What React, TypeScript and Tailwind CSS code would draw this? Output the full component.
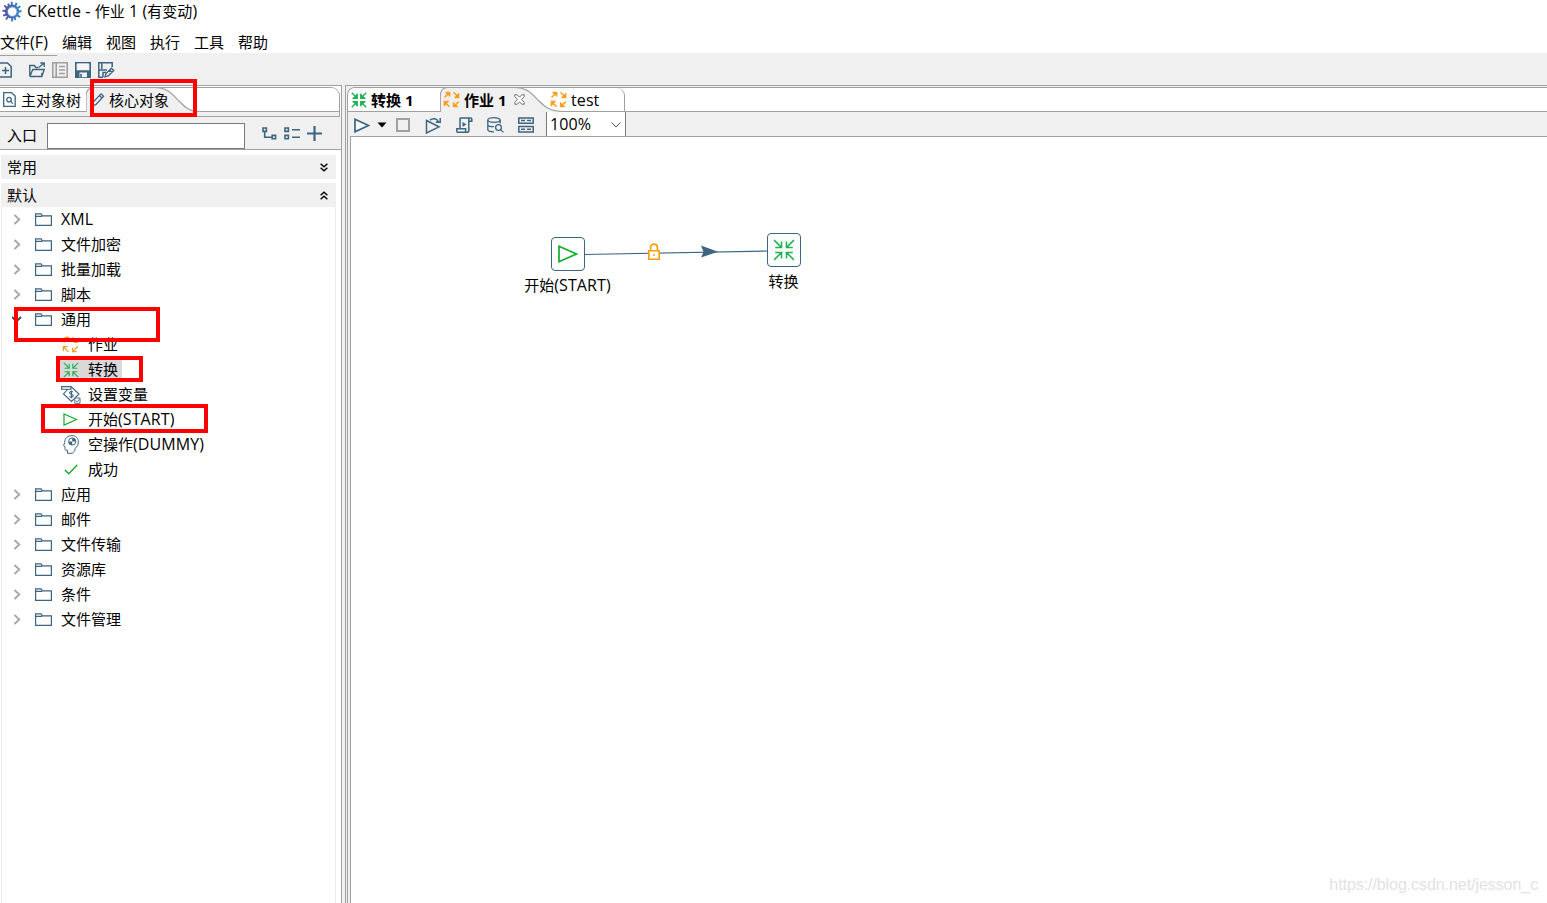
import type { ReactNode } from 'react';
import clsx from 'clsx';

const STEEL = '#3d6480';
const GREEN = '#1eb254';
const ORANGE = '#fa9d21';

type IconProps = { className?: string; color?: string; thin?: boolean };

// latin runs are set one pixel larger than the chinese ones
const Text = ({ children, className }: { children: string; className?: string }) => (
  <span className={clsx('whitespace-pre', className)}>
    {children.split(/([\x20-\x7e]+)/).map((part, i) =>
      i % 2 ? (
        <span key={i} className="text-[16px] leading-none tracking-[0.1px]">
          {part}
        </span>
      ) : (
        part
      )
    )}
  </span>
);

const LogoIcon = () => (
  <svg width="20" height="21" viewBox="0 0 20 21" fill="none" className="shrink-0">
    <defs>
      <linearGradient id="logo" gradientUnits="userSpaceOnUse" x1="0" y1="0" x2="20" y2="0">
        <stop offset="0" stopColor="#5f4ca0" />
        <stop offset="1" stopColor="#2a8acb" />
      </linearGradient>
    </defs>
    <circle cx="10" cy="10.5" r="5.6" stroke="url(#logo)" strokeWidth="3" />
    <path
      d="M10 6L9.6 .8M12.5 7L14.6 1.8M14 8L18.4 5.2M14.5 10.5L19.6 10.2M14 13L18 16.2M12 15L13.4 19M10 15L10.2 20.4M7 14L4 18.6M6 13L1.2 14.6M5.5 10.5L.4 9.6M6 8L2.2 4.4M8 7L6 2.6"
      stroke="url(#logo)"
      strokeWidth="1.9"
    />
    <circle cx="10.4" cy="10.7" r="4.2" fill="#fff" />
    <circle cx="10.4" cy="10.7" r="4.6" stroke="#a9d4f2" strokeWidth="1" strokeDasharray="1.5 1" />
  </svg>
);

const NewIcon = () => (
  <svg width="12" height="16" viewBox="0 0 12 16" fill="none" stroke={STEEL} strokeWidth="1.5">
    <path d="M-1 1H7.5L11.2 4.5V15H-1" />
    <path d="M2 8.5H9M5.5 5V12" />
  </svg>
);

const OpenIcon = () => (
  <svg width="16" height="16" viewBox="0 0 16 16" fill="none" stroke={STEEL} strokeWidth="1.4">
    <path d="M.8 14.5V3.5H5.3L6.8 5.5H9.3M.8 14.5H12.8L15.2 7.5H3.8L.8 14.5M12.8 14.5V11" />
    <path d="M9.8 5.5L14.8 1.2M11.3 1H15.2V5" />
  </svg>
);

const ListDocIcon = () => (
  <svg width="16" height="16" viewBox="0 0 16 16" fill="none" stroke="#a0a0a0" strokeWidth="1.6">
    <path d="M.8 .8H15.2V15.2H.8ZM4.2 1V15M7 4.5H13M7 8H13M7 11.5H13" />
  </svg>
);

const SaveIcon = () => (
  <svg width="16" height="16" viewBox="0 0 16 16" fill="none" stroke={STEEL} strokeWidth="1.6">
    <path d="M.8 .8H15.2V15.2H.8Z" />
    <path d="M3 1.6H13V7H3Z" fill="#f7f7f7" stroke="none" />
    <path d="M1 8.3H15V15H1Z" fill={STEEL} stroke="none" />
    <path d="M4.5 10.5H12V15.2H4.5Z" fill="#f0f0f0" stroke="none" />
    <path d="M6 12V15" />
  </svg>
);

const SaveAsIcon = () => (
  <svg width="17" height="16" viewBox="0 0 17 16" fill="none" stroke={STEEL} strokeWidth="1.5">
    <path d="M5 15.2H.8V.8H14.2V5M1 8H9M3.8 1V7M5 15V10.5H8" />
    <path d="M7 14.8L8 11.5L13.5 6.2L15.8 8.5L10.2 13.8ZM11.5 8L14 10.5" strokeWidth="1.3" />
  </svg>
);

const SearchDocIcon = () => (
  <svg width="13" height="15" viewBox="0 0 13 15" fill="none" stroke={STEEL} strokeWidth="1.3">
    <path d="M.7 .7H8.5L12.2 4V14.3H.7Z" />
    <circle cx="6" cy="7.6" r="2.3" />
    <path d="M7.8 9.4L9.8 11.6" />
  </svg>
);

const PencilIcon = () => (
  <svg width="14" height="15" viewBox="0 0 14 15" fill="none" stroke={STEEL} strokeWidth="1.3">
    <path d="M1 14L2.2 10L10 1.8L12.6 4.2L4.8 12.6ZM8.4 3.6L11 6" />
  </svg>
);

// four arrows that meet in the middle
const TransIcon = ({ className, color = GREEN, thin }: IconProps) => (
  <svg viewBox="0 0 16 16" fill={thin ? 'none' : color} stroke={color} strokeWidth={thin ? 1.1 : 1.4} className={clsx('shrink-0', className)}>
    <path d="M.8 .8L6 6M6.2 1.8V6.2H1.6M15.2 .8L10 6M9.8 1.8V6.2H14.4M.8 15.2L6 10M6.2 14.2V9.8H1.6M15.2 15.2L10 10M9.8 14.2V9.8H14.4" />
  </svg>
);

// four arrows that chase one another
const JobIcon = ({ className, color = ORANGE, thin }: IconProps) => (
  <svg viewBox="0 0 17 17" fill={thin ? 'none' : color} stroke={color} strokeWidth={thin ? 1.2 : 1.5} className={clsx('shrink-0', className)}>
    <path d="M1.5 6.5L6.3 1.7M2.5 1.4H6.6V5.6" />
    <path d="M10.5 1.2L15.4 6.1M15.6 2.2V6.4H11.4" />
    <path d="M15.8 10.5L10.9 15.4M10.6 11.4V15.6H14.8" />
    <path d="M6.5 15.8L1.6 10.9M1.4 15V10.6H5.7" />
  </svg>
);

const StartIcon = ({ className }: IconProps) => (
  <svg viewBox="0 0 20 18" fill="none" stroke="#13ad2b" strokeWidth="1.7" className={clsx('shrink-0', className)}>
    <path d="M1 1.3L18.5 9L1 16.7Z" />
  </svg>
);

const VariableIcon = () => (
  <svg width="20" height="19" viewBox="0 0 20 19" fill="none" stroke={STEEL} strokeWidth="1.1">
    <path d="M.6 1.6H10V4.2H.6ZM10 1.5L18 9L10.5 16.5L2.5 9L6.5 4.5" />
    <path d="M12 7.2C11 6 8.4 6.4 8.6 8C8.8 9.6 12.2 8.8 12.2 10.8C12.2 12.4 9.4 12.6 8.4 11.2M10.4 5.5V13.3" />
    <path d="M13.8 13H19V18.4H13.8ZM14.8 15.6L16.2 17L18.4 14.2" fill="#fff" strokeWidth=".9" />
  </svg>
);

const DummyIcon = () => (
  <svg width="16" height="19" viewBox="0 0 16 19" fill="none" stroke={STEEL} strokeWidth="1">
    <path d="M4.5 18.3V15.2H3C2.2 15.2 2 14.5 2 13.6V11.6L.6 10.6L1.7 7.5C1.6 3 5 .6 9 .6C13 .6 15.4 3.6 15.4 7C15.4 10 13.8 11.5 12 13.5V15.5L9.2 18.3H4.5" />
    <circle cx="9.2" cy="6.5" r="3.6" />
    <path d="M9.2 6.5V2.9A3.6 3.6 0 0 1 12.8 6.5ZM9.2 6.5V10.1A3.6 3.6 0 0 1 5.6 6.5Z" fill={STEEL} stroke="none" />
  </svg>
);

const SuccessIcon = () => (
  <svg width="14" height="11" viewBox="0 0 14 11" fill="none" stroke="#13ad2b" strokeWidth="1.4">
    <path d="M.8 6L4.8 9.8L13.2 1" />
  </svg>
);

const FolderIcon = () => (
  <svg width="17" height="13" viewBox="0 0 17 13" fill="none" stroke={STEEL} strokeWidth="1.2">
    <path d="M.6 12.4V.8H6L7.4 2.8H16.4V12.4ZM1 3.4H7" />
  </svg>
);

const PlayIcon = () => (
  <svg width="16" height="15" viewBox="0 0 16 15" fill="none" stroke={STEEL} strokeWidth="1.7">
    <path d="M1 1.2L14.5 7.5L1 13.8Z" fill="#f7f7f7" />
  </svg>
);

const ReplayIcon = () => (
  <svg width="17" height="17" viewBox="0 0 17 17" fill="none" stroke={STEEL} strokeWidth="1.5">
    <path d="M1.5 3.5L14 9.8L1.5 16Z" />
    <path d="M5 3.2C8 .8 11.5 1.2 13.5 4.8M15.2 1V5.2H10.8" />
  </svg>
);

const ScriptIcon = () => (
  <svg width="17" height="16" viewBox="0 0 17 16" fill="none" stroke={STEEL} strokeWidth="1.5">
    <path d="M4 11.5V2C4 1.2 4.4 .9 5 .9H14.6C15.4 .9 15.8 1.4 15.8 2V4.2H12.8M12.8 1V14C12.8 14.8 12.4 15.2 11.6 15.2H1.6C1 15.2 .8 14.8 .8 14.2V11.8H9.6V15" />
    <path d="M6.5 5L10.5 7.4L6.5 9.8Z" fill={STEEL} stroke="none" />
  </svg>
);

const DatabaseIcon = () => (
  <svg width="17" height="16" viewBox="0 0 17 16" fill="none" stroke={STEEL} strokeWidth="1.3">
    <ellipse cx="7" cy="3" rx="6.2" ry="2.3" />
    <path d="M.8 3V12.5C.8 14 4 14.8 7 14.8M13.2 3V6.5M.8 8C1.5 9.4 4.5 9.8 7 9.6" />
    <circle cx="11.5" cy="10.5" r="2.9" />
    <path d="M13.6 12.6L16.4 15.4" />
  </svg>
);

const ResultsIcon = () => (
  <svg width="16" height="16" viewBox="0 0 16 16" fill="none" stroke={STEEL} strokeWidth="1.5">
    <path d="M.8 .9H15.2V6.2H.8ZM.8 9.6H15.2V14.9H.8ZM3 3.5H7M9 3.5H13M3 12.2H7M9 12.2H13" />
  </svg>
);

const ExpandIcon = () => (
  <svg width="15" height="13" viewBox="0 0 15 13" fill="none" stroke={STEEL} strokeWidth="1.6">
    <path d="M1 1H4.4V4.4H1ZM10.2 8.4H13.6V11.8H10.2ZM2.7 5V10.2H9.5" />
  </svg>
);

const CollapseIcon = () => (
  <svg width="16" height="13" viewBox="0 0 16 13" fill="none" stroke={STEEL} strokeWidth="1.6">
    <path d="M1 1H4.4V4.4H1ZM1 8.4H4.4V11.8H1ZM8 2.7H16M8 10.2H16" />
  </svg>
);

const PlusIcon = () => (
  <svg width="15" height="15" viewBox="0 0 15 15" stroke={STEEL} strokeWidth="2.2">
    <path d="M0 7.5H15M7.5 0V15" />
  </svg>
);

const DoubleChevron = ({ up }: { up?: boolean }) => (
  <svg width="8" height="9" viewBox="0 0 8 9" fill="none" stroke="#000" strokeWidth="1.4" className={clsx(up && 'rotate-180')}>
    <path d="M.6 .8L4 3.8L7.4 .8M.6 4.8L4 7.8L7.4 4.8" />
  </svg>
);

type TreeItem = { label: string; open?: boolean; children?: { label: string; icon: ReactNode; selected?: boolean }[] };

const tree: TreeItem[] = [
  { label: 'XML' },
  { label: '文件加密' },
  { label: '批量加载' },
  { label: '脚本' },
  {
    label: '通用',
    open: true,
    children: [
      { label: '作业', icon: <JobIcon thin className="size-[17px]" /> },
      { label: '转换', icon: <TransIcon thin className="size-4" />, selected: true },
      { label: '设置变量', icon: <VariableIcon /> },
      { label: '开始(START)', icon: <StartIcon className="h-[13px] w-[15px]" /> },
      { label: '空操作(DUMMY)', icon: <DummyIcon /> },
      { label: '成功', icon: <SuccessIcon /> },
    ],
  },
  { label: '应用' },
  { label: '邮件' },
  { label: '文件传输' },
  { label: '资源库' },
  { label: '条件' },
  { label: '文件管理' },
];

const menus = ['编辑', '视图', '执行', '工具', '帮助'];

const Highlight = ({ className }: { className: string }) => (
  <div className={clsx('pointer-events-none absolute z-10 border-4 border-[#fe0000]', className)} />
);

const TabCurve = ({ width, d }: { width: number; d: string }) => (
  <svg width={width} height="24" viewBox={`0 0 ${width} 24`} className="absolute top-0 left-0">
    <path d={d} fill="#f0f0f0" stroke="#a0a0a0" strokeWidth="1.2" />
  </svg>
);

const SectionBar = ({ label, up }: { label: string; up?: boolean }) => (
  <div className="ml-px flex h-6 w-[335px] shrink-0 items-center justify-between bg-[#f0f0f0] pr-2 pl-1.5">
    <span className="pb-px">{label}</span>
    <DoubleChevron up={up} />
  </div>
);

const Tree = () => (
  <div className="ml-px w-[335px] flex-1 border-x border-[#ececec]">
    {tree.map((item) => (
      <div key={item.label}>
        <div className="flex h-[25px] items-center">
          <svg width="10" height="11" viewBox="0 0 10 11" fill="none" strokeWidth="1.8" stroke={item.open ? '#404040' : '#a6a6a6'} className="ml-2.5">
            <path d={item.open ? 'M0 3L4.5 7.5L9 3' : 'M2.5 1L7.3 5.5L2.5 10'} />
          </svg>
          <span className="ml-[13px] w-[26px]">
            <FolderIcon />
          </span>
          <Text className="pb-0.5">{item.label}</Text>
        </div>
        {item.children?.map((child) => (
          <div key={child.label} className="flex h-[25px] items-center pl-[58px]">
            <span className={clsx('flex h-[21px] items-center', child.selected && 'bg-[#d9d9d9]')}>
              <span className="flex w-[21px] justify-center">{child.icon}</span>
              <Text className="pr-1 pb-0.5 pl-[7px]">{child.label}</Text>
            </span>
          </div>
        ))}
      </div>
    ))}
  </div>
);

const LeftPanel = () => (
  <aside className="flex w-[342px] flex-col border-t border-r border-[#a0a0a0] bg-white">
    <div className="mt-px w-[340px] rounded-tr-[9px] border-t border-r border-b border-[#a0a0a0] bg-[#f0f0f0]">
      <div className="flex h-6 rounded-tr-[8px] border-b border-[#a0a0a0] bg-white">
        <div className="flex w-[86px] items-center gap-[5px] pl-[3px]">
          <SearchDocIcon />
          <span className="whitespace-nowrap">主对象树</span>
        </div>
        <div className="relative flex w-[110px] items-center">
          <TabCurve width={112} d="M0 25V8C0 3 3 0 7 -.5H68C82 -.5 87 7 93 13C98 18 103 23.5 112 23.5V25" />
          <span className="relative flex items-center gap-1 pl-[5px]">
            <PencilIcon />
            <span>核心对象</span>
          </span>
        </div>
      </div>
      <div className="h-1" />
    </div>
    <div className="flex h-[33px] items-center border-b border-[#a0a0a0] bg-[#f0f0f0] pt-1">
      <span className="ml-[7px] w-10">入口</span>
      <input className="mt-px h-[26px] w-[198px] border border-[#7a7a7a] bg-white px-1 outline-none" />
      <div className="mb-1 ml-[17px] flex items-center gap-[7px]">
        <ExpandIcon />
        <CollapseIcon />
        <PlusIcon />
      </div>
    </div>
    <div className="h-[5px] shrink-0" />
    <SectionBar label="常用" />
    <div className="h-1 shrink-0" />
    <SectionBar label="默认" up />
    <Tree />
  </aside>
);

const EditorTabs = () => (
  <div className="flex h-6 rounded-tl-[7px] border-b border-[#a0a0a0] bg-white">
    <div className="flex w-[92px] items-center gap-1 pl-[3px] font-bold">
      <TransIcon className="size-4" />
      <span>转换 1</span>
    </div>
    <div className="relative flex w-[108px] items-center font-bold">
      <TabCurve width={124} d="M.3 25V8C.3 3 3 0 7 -.5H74C88 -.5 93 7 99 13C105 19 110 23.5 124 23.5V25" />
      <span className="relative flex items-center gap-1 pl-[3px]">
        <JobIcon className="size-[17px]" />
        <span>作业 1</span>
        <svg width="11" height="11" viewBox="0 0 11 11" fill="#fff" stroke="#606060" strokeWidth=".9" className="ml-1">
          <path d="M.8 .8H3.2L5.5 3.2L7.8 .8H10.2V2.6L7.5 5.5L10.2 8.4V10.2H7.8L5.5 7.8L3.2 10.2H.8V8.4L3.5 5.5L.8 2.6Z" />
        </svg>
      </span>
    </div>
    <div className="flex w-[77px] items-center gap-1 rounded-tr-[8px] border-r border-[#a0a0a0] pl-0.5">
      <JobIcon className="size-[17px]" />
      <Text>test</Text>
    </div>
  </div>
);

const EditorToolbar = () => (
  <div className="flex h-6 items-center bg-[#f0f0f0] pl-1.5">
    <div className="flex items-center pt-0.5">
      <PlayIcon />
      <svg width="10" height="6" viewBox="0 0 10 6" className="ml-[7px]">
        <path d="M.5 .5H9.5L5 5.5Z" />
      </svg>
      <span className="ml-[9px] size-3.5 border-2 border-[#a0a0a0]" />
      <div className="ml-[15px] flex items-center gap-3.5">
        <ReplayIcon />
        <ScriptIcon />
        <DatabaseIcon />
        <ResultsIcon />
      </div>
    </div>
    <div className="ml-3 flex h-6 w-20 items-center justify-between border-x border-[#7a7a7a] bg-white pr-1 pl-[3px]">
      <Text>100%</Text>
      <svg width="10" height="6" viewBox="0 0 10 6" fill="none" stroke="#505050" className="mt-0.5">
        <path d="M.5 .5L5 5L9.5 .5" />
      </svg>
    </div>
  </div>
);

const Node = ({ className, label, children }: { className: string; label: string; children: ReactNode }) => (
  <div className={clsx('absolute flex w-[90px] flex-col items-center', className)}>
    <div className="flex size-[34px] items-center justify-center rounded-[4px] border border-[#3d6480] bg-white">{children}</div>
    <Text className="mt-1 mr-px leading-5">{label}</Text>
  </div>
);

const Canvas = () => (
  <div className="relative ml-0.5 flex-1 overflow-hidden border-t border-l border-[#a0a0a0] bg-white">
    <svg width="184" height="20" viewBox="0 0 184 20" className="absolute top-[105px] left-[233px]">
      <path d="M0 12.5L184 9" stroke={STEEL} strokeWidth="1.1" />
      <path d="M117 3.5L134 9.8L117 15.5L119.5 10Z" fill={STEEL} />
      <path d="M64.8 8.8H75.2V17.3H64.8Z" fill="#fff" stroke="#fd9d0e" strokeWidth="1.6" />
      <path d="M66.6 8.5V5.5C66.6 1 73.4 1 73.4 5.5V8.5" fill="none" stroke="#fd9d0e" strokeWidth="1.6" />
      <path d="M69.2 12H70.8V14H69.2Z" fill="#fd9d0e" />
    </svg>
    <Node className="top-[100px] left-[172px]" label="开始(START)">
      <StartIcon className="h-[18px] w-5" />
    </Node>
    <Node className="top-[96px] left-[388px]" label="转换">
      <TransIcon thin className="size-[22px]" />
    </Node>
    <span className="absolute right-[9px] bottom-1.5 font-['Liberation_Sans',sans-serif] text-base leading-6 tracking-[-0.07px] text-[#e2e2e2]">
      https://blog.csdn.net/jesson_c
    </span>
  </div>
);

export default function App() {
  return (
    <div className="relative flex h-[903px] w-[1547px] flex-col overflow-hidden bg-white font-['Open_Sans','Noto_Sans_CJK_SC',sans-serif] text-[15px] leading-5 text-black">
      <header className="flex h-6 items-center gap-[5px] pl-0.5">
        <div className="-mt-0.5">
          <LogoIcon />
        </div>
        <Text className="pb-0.5">CKettle - 作业 1 (有变动)</Text>
      </header>
      <nav className="flex h-[29px] items-center gap-3.5 pt-1.5">
        <Text>文件(F)</Text>
        {menus.map((menu) => (
          <span key={menu}>{menu}</span>
        ))}
      </nav>
      <div className="h-8 bg-[#f0f0f0] pt-0.5">
        <div className="h-px w-[57px] bg-[#a0a0a0]" />
        <div className="flex items-center gap-[7px] pt-1.5">
          <span className="mr-2.5">
            <NewIcon />
          </span>
          <OpenIcon />
          <ListDocIcon />
          <SaveIcon />
          <SaveAsIcon />
        </div>
      </div>
      <main className="flex min-h-0 flex-1 bg-[#f0f0f0]">
        <LeftPanel />
        <div className="ml-[3px] flex flex-1 border-t border-l border-[#a0a0a0] bg-[#f0f0f0] pt-px pl-px">
          <section className="flex flex-1 flex-col rounded-tl-[8px] border-t border-l border-[#a0a0a0]">
            <EditorTabs />
            <EditorToolbar />
            <Canvas />
          </section>
        </div>
      </main>
      <Highlight className="top-[79px] left-[90px] h-[38px] w-[107px]" />
      <Highlight className="top-[307px] left-[14px] h-[35px] w-[146px]" />
      <Highlight className="top-[356px] left-[56px] h-[26px] w-[87px]" />
      <Highlight className="top-[404px] left-[41px] h-[29px] w-[167px]" />
    </div>
  );
}
